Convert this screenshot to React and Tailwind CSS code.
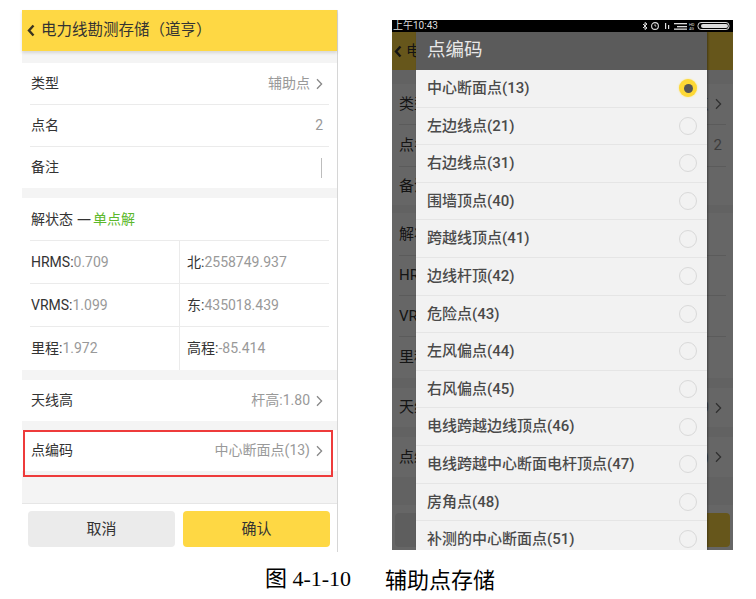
import React from "react";

const Chev = ({ className = "" }) => (
  <svg width="7" height="12" viewBox="0 0 7 12" className={className}>
    <path d="M1 1.2l4.6 4.8L1 10.8" fill="none" stroke="currentColor" strokeWidth="1.3" />
  </svg>
);

const Back = ({ className = "" }) => (
  <svg width="8" height="13" viewBox="0 0 8 13" className={className}>
    <path d="M6.5 1.5L2 6.5l4.5 5" fill="none" stroke="currentColor" strokeWidth="2.4" />
  </svg>
);

function Row({ label, value, chev, cursor, last, h = "h-[42px]" }) {
  return (
    <div className={`${h} flex items-center justify-between pl-[1px] pr-[6px] ${last ? "" : "border-b border-[#ebebeb]"}`}>
      <span className="text-[14px] text-[#333]">{label}</span>
      <span className="flex items-center gap-[6px] text-[14px] text-[#999]">
        {value}
        {chev && <Chev className="text-[#888]" />}
        {cursor && <span className="w-px h-[20px] bg-[#bdbdbd] mr-[1px]" />}
      </span>
    </div>
  );
}

function Cell({ k, v, left }) {
  return (
    <div className={`flex items-center text-[14px] ${left ? "pl-[1px] border-r border-[#ebebeb]" : "pl-[7px]"}`}>
      <span className="text-[#333]">{k}</span>
      <span className="text-[#999]">{v}</span>
    </div>
  );
}

function LeftScreen() {
  return (
    <div className="w-[316px] h-[542px] mt-[10px] bg-[#f4f4f4] border-r border-[#d6d6d6] flex flex-col">
      <header className="h-[41px] shrink-0 bg-[#fed844] flex items-center pl-[5px] shadow-[0_2px_3px_rgba(0,0,0,0.12)] relative z-10">
        <Back className="text-[#3a3320]" />
        <span className="ml-[6px] text-[15.5px] text-[#333]">电力线勘测存储（道亨）</span>
      </header>
      <div className="h-[12px] shrink-0" />
      <section className="bg-white px-[8px] shrink-0">
        <Row label="类型" value="辅助点" chev />
        <Row label="点名" value="2" />
        <Row label="备注" cursor last h="h-[41px]" />
      </section>
      <div className="h-[10px] shrink-0" />
      <section className="bg-white px-[8px] shrink-0">
        <div className="h-[43px] flex items-center pl-[1px] border-b border-[#ebebeb] text-[14px] text-[#333]">
          <span>解状态</span>
          <span className="font-['Noto_Sans_CJK_SC',sans-serif] ml-[4px] mr-[2px]">一</span>
          <span className="text-[#5cb82c]">单点解</span>
        </div>
        <div className="grid grid-cols-[150px_1fr] h-[43px] border-b border-[#ebebeb]">
          <Cell left k="HRMS:" v="0.709" />
          <Cell k="北:" v="2558749.937" />
        </div>
        <div className="grid grid-cols-[150px_1fr] h-[43px] border-b border-[#ebebeb]">
          <Cell left k="VRMS:" v=" 1.099" />
          <Cell k="东:" v="435018.439" />
        </div>
        <div className="grid grid-cols-[150px_1fr] h-[43px]">
          <Cell left k="里程:" v="1.972" />
          <Cell k="高程:" v="-85.414" />
        </div>
      </section>
      <div className="h-[10px] shrink-0" />
      <section className="bg-white px-[8px] shrink-0">
        <Row label="天线高" value="杆高:1.80" chev last h="h-[41px]" />
      </section>
      <div className="h-[9px] shrink-0" />
      <section className="bg-white px-[8px] shrink-0 relative">
        <Row label="点编码" value="中心断面点(13)" chev last h="h-[41px]" />
        <div className="absolute left-[1px] top-0 w-[310px] h-[47px] border-2 border-[#ee3b3b]" />
      </section>
      <div className="flex-1" />
      <footer className="h-[49px] shrink-0 bg-white border-t border-[#e6e6e6] flex gap-[8px] px-[6px] pt-[7px]">
        <button className="w-[147px] h-[36px] rounded-[4px] bg-[#ebebeb] text-[15px] text-[#333]">取消</button>
        <button className="w-[147px] h-[36px] rounded-[4px] bg-[#fed844] text-[15px] text-[#333]">确认</button>
      </footer>
    </div>
  );
}

function BgRow({ label, value, chev, h, last }) {
  return (
    <div className={`${h} flex items-center justify-between pr-[4px] ${last ? "" : "border-b border-[#e4e4e4]"}`}>
      <span className="w-[17px] overflow-hidden whitespace-nowrap text-[15px] text-[#333]">{label}</span>
      <span className="flex items-center gap-[6px] text-[15px] text-[#999]">
        {value && (
          <span className="w-[9px] overflow-hidden whitespace-nowrap flex justify-end">{value}</span>
        )}
        {chev && <Chev className="text-[#777]" />}
      </span>
    </div>
  );
}

function BgScreen() {
  return (
    <div className="flex flex-col h-[518px]">
      <header className="h-[38px] shrink-0 bg-[#fed844] flex items-center pl-[2px]">
        <Back className="text-[#333]" />
        <span className="ml-[4px] w-[12px] overflow-hidden whitespace-nowrap text-[15px] text-[#333]">电力线勘测存储（道亨）</span>
      </header>
      <div className="h-[14px] shrink-0" />
      <section className="bg-white pl-[7px] pr-[7px] shrink-0">
        <BgRow label="类型" value="辅助点" chev h="h-[41px]" />
        <BgRow label="点名" value="2" h="h-[42px]" />
        <BgRow label="备注" h="h-[38px]" last />
      </section>
      <div className="h-[8px] shrink-0" />
      <section className="bg-white pl-[7px] pr-[7px] shrink-0">
        <BgRow label="解状态" h="h-[43px]" />
        <BgRow label="HRMS: 0.709" h="h-[40px]" />
        <BgRow label="VRMS: 1.099" h="h-[41px]" />
        <BgRow label="里程:1.972" h="h-[41px]" last />
      </section>
      <div className="h-[10px] shrink-0" />
      <section className="bg-white pl-[7px] pr-[7px] shrink-0">
        <BgRow label="天线高" value="杆高:1.80" chev h="h-[39px]" last />
      </section>
      <div className="h-[10px] shrink-0" />
      <section className="bg-white pl-[7px] pr-[7px] shrink-0">
        <BgRow label="点编码" value="中心断面点(13)" chev h="h-[40px]" last />
      </section>
      <div className="flex-1" />
      <footer className="h-[45px] shrink-0 bg-white flex justify-between px-[3px] pt-[8px]">
        <div className="w-[150px] h-[34px] rounded-[4px] bg-[#ebebeb]" />
        <div className="w-[150px] h-[34px] rounded-[4px] bg-[#fed844]" />
      </footer>
    </div>
  );
}

const items = [
  "中心断面点(13)",
  "左边线点(21)",
  "右边线点(31)",
  "围墙顶点(40)",
  "跨越线顶点(41)",
  "边线杆顶(42)",
  "危险点(43)",
  "左风偏点(44)",
  "右风偏点(45)",
  "电线跨越边线顶点(46)",
  "电线跨越中心断面电杆顶点(47)",
  "房角点(48)",
  "补测的中心断面点(51)",
];

function StatusIcons() {
  return (
    <svg width="90" height="10" viewBox="0 0 90 10" className="text-[#ddd]">
      <path d="M2 3l4 4-2 1.5V1.5L6 3 2 7" fill="none" stroke="currentColor" strokeWidth="1" />
      <circle cx="14" cy="5" r="3.4" fill="none" stroke="currentColor" strokeWidth="1.1" />
      <path d="M14 3.3V5h1.3" fill="none" stroke="currentColor" strokeWidth="0.9" />
      <rect x="24" y="2" width="1.2" height="6" fill="currentColor" />
      <rect x="27" y="4" width="1.2" height="4" fill="currentColor" />
      <rect x="33" y="2" width="13" height="1.3" fill="currentColor" />
      <rect x="36" y="5" width="10" height="1.3" fill="currentColor" />
      <rect x="33" y="7.5" width="13" height="1.3" fill="currentColor" />
      <text x="48" y="5" fontSize="4" fill="currentColor" fontFamily="Roboto">HD</text>
      <text x="48" y="9" fontSize="4" fill="currentColor" fontFamily="Roboto">4G</text>
      <rect x="57" y="1.5" width="31" height="7" rx="3" fill="none" stroke="currentColor" strokeWidth="1" />
      <rect x="60" y="3" width="27" height="4" rx="2" fill="currentColor" />
    </svg>
  );
}

function RightScreen() {
  return (
    <div className="relative w-[341px] h-[530px] mt-[20px] overflow-hidden bg-[#f4f4f4] flex flex-col">
      <div className="h-[12px] shrink-0 bg-black flex items-center justify-between pl-[1px] pr-[2px]">
        <span className="text-[10px] leading-none text-[#ddd]">上午10:43</span>
        <StatusIcons />
      </div>
      <div className="relative flex-1">
        <BgScreen />
        <div className="absolute inset-0 bg-black/60" />
        <div className="absolute left-[24px] top-0 bottom-0 w-[291px] flex flex-col shadow-[1px_0_2px_rgba(0,0,0,0.35)]">
          <div className="h-[38px] shrink-0 bg-[#5b5b5b] flex items-center pl-[11px] text-[18.5px] text-[#e8e8e8]">
            点编码
          </div>
          <div className="flex-1 bg-[#f2f2f2]">
            {items.map((t, i) => (
              <div
                key={t}
                className="h-[37.6px] flex items-center justify-between pl-[11px] pr-[10px] border-b border-[#e5e5e5]"
              >
                <span className="text-[15px] text-[#4a4a4a] font-medium">{t}</span>
                {i === 0 ? (
                  <span className="w-[18px] h-[18px] rounded-full bg-[#fdd835] flex items-center justify-center shadow-[0_0_2px_#fde36a]">
                    <span className="w-[9px] h-[9px] rounded-full bg-[#555]" />
                  </span>
                ) : (
                  <span className="w-[18px] h-[18px] rounded-full border-[1.5px] border-[#d9d9d9]" />
                )}
              </div>
            ))}
          </div>
        </div>
      </div>
    </div>
  );
}

export default function App() {
  return (
    <div className="w-[756px] h-[599px] bg-white font-['Roboto','Noto_Sans_CJK_SC',sans-serif] overflow-hidden">
      <div className="flex items-start pl-[22px] gap-[54px]">
        <LeftScreen />
        <RightScreen />
      </div>
      <div className="mt-[11px] flex justify-center items-center gap-[34px] text-[22px] leading-[26px] text-black pl-[4px]">
        <span>
          <span className="font-['Noto_Sans_CJK_SC',serif]">图</span>
          <span className="font-['Liberation_Serif',serif]"> 4-1-10</span>
        </span>
        <span className="font-['Noto_Sans_CJK_SC',serif]">辅助点存储</span>
      </div>
    </div>
  );
}
